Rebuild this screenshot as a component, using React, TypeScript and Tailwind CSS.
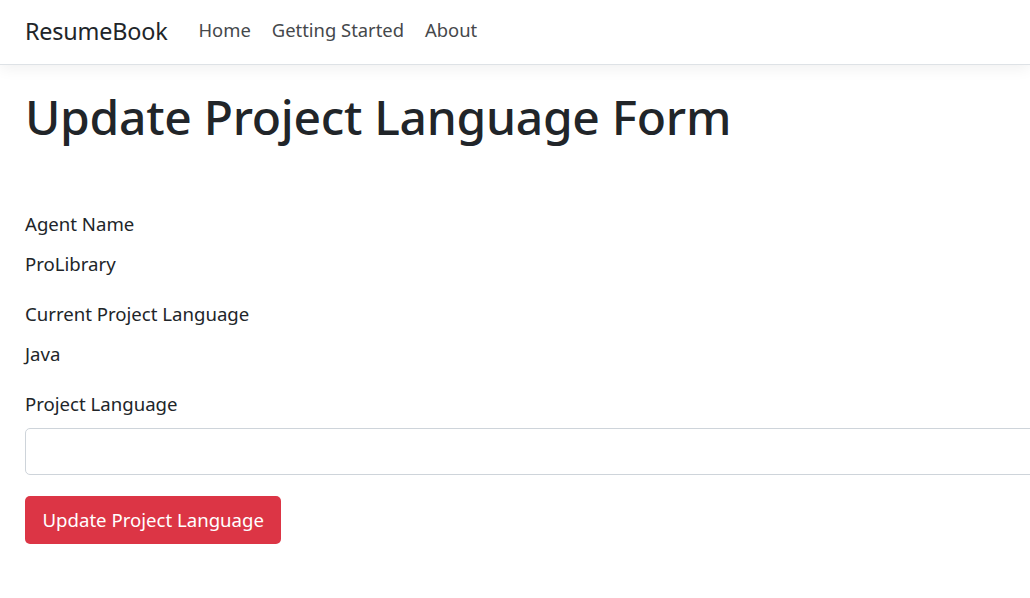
import React from "react";

export default function App() {
  const font = { fontFamily: '"Noto Sans", "Open Sans", sans-serif' };
  return (
    <div className="w-full min-h-[598px] bg-white overflow-hidden text-[#212529]" style={font}>
      <nav className="h-[65px] border-b border-[#dee2e6] bg-white shadow-[0_4px_14px_rgba(0,0,0,0.06)] flex items-center px-[25px] relative z-10">
        <span className="text-[23.4px] leading-none text-[#212529] mr-[31px] tracking-[-0.2px]">ResumeBook</span>
        <div className="flex items-center gap-[21px] text-[18.4px] text-[#45484b] mb-[4px]">
          <span>Home</span>
          <span>Getting Started</span>
          <span>About</span>
        </div>
      </nav>
      <main className="px-[25px]">
        <h1 className="text-[48px] font-medium leading-[1.2] mt-[23px] mb-[63px] tracking-[-0.3px]">Update Project Language Form</h1>
        <div className="text-[18.6px] leading-[30px]">
          <div className="mb-[10px]">Agent Name</div>
          <div className="mb-[20px]">ProLibrary</div>
          <div className="mb-[10px]">Current Project Language</div>
          <div className="mb-[20px]">Java</div>
          <div className="mb-[9px]">Project Language</div>
          <input className="block w-[1200px] h-[47px] border border-[#ced4da] rounded-[5px] outline-none" />
          <button className="mt-[21px] h-[48px] px-[17.5px] bg-[#dc3545] text-white rounded-[5px] text-[18.6px]">Update Project Language</button>
        </div>
      </main>
    </div>
  );
}
